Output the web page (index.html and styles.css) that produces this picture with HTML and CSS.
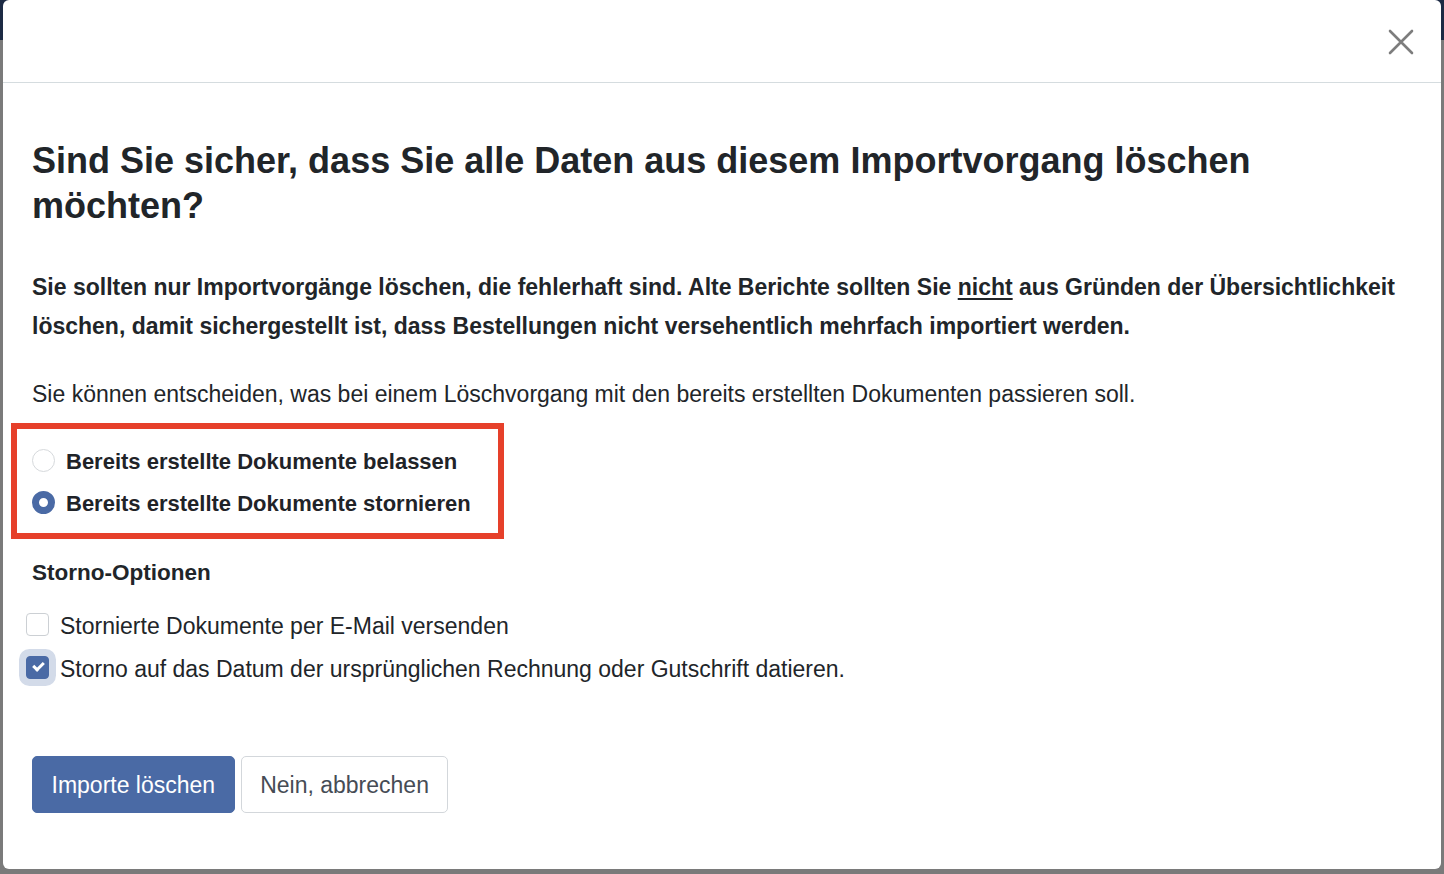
FILE: index.html
```html
<!DOCTYPE html>
<html lang="de">
<head>
    <meta charset="UTF-8">
    <meta name="viewport" content="width=device-width, initial-scale=1.0">
    <title>Importvorgang löschen</title>
    <link rel="stylesheet" href="styles.css">
</head>
<body>
    <div class="modal">
        <div class="modal-header">
            <button class="close-btn" type="button" aria-label="Schließen">
                <svg width="26" height="26" viewBox="0 0 26 26">
                    <path d="M2 2 L24 24 M24 2 L2 24" stroke="#7d7d7d" stroke-width="2.6" stroke-linecap="round" fill="none"/>
                </svg>
            </button>
        </div>

        <div class="modal-body">
            <h2 class="modal-title">Sind Sie sicher, dass Sie alle Daten aus diesem Importvorgang löschen möchten?</h2>

            <p class="warning-text">Sie sollten nur Importvorgänge löschen, die fehlerhaft sind. Alte Berichte sollten Sie <u>nicht</u> aus Gründen der Übersichtlichkeit löschen, damit sichergestellt ist, dass Bestellungen nicht versehentlich mehrfach importiert werden.</p>

            <p class="info-text">Sie können entscheiden, was bei einem Löschvorgang mit den bereits erstellten Dokumenten passieren soll.</p>

            <!-- Auswahl: Dokumente behalten oder stornieren -->
            <div class="radio-group">
                <label class="radio-row">
                    <input type="radio" name="docAction" value="keep">
                    <span>Bereits erstellte Dokumente belassen</span>
                </label>
                <label class="radio-row">
                    <input type="radio" name="docAction" value="cancel" checked>
                    <span>Bereits erstellte Dokumente stornieren</span>
                </label>
            </div>

            <h5 class="section-title">Storno-Optionen</h5>

            <label class="check-row">
                <input type="checkbox" name="sendMail">
                <span>Stornierte Dokumente per E-Mail versenden</span>
            </label>
            <label class="check-row">
                <input type="checkbox" name="originalDate" class="focused" checked>
                <span>Storno auf das Datum der ursprünglichen Rechnung oder Gutschrift datieren.</span>
            </label>

            <div class="buttons-container">
                <button class="btn btn-primary" type="button">Importe löschen</button>
                <button class="btn btn-default" type="button">Nein, abbrechen</button>
            </div>
        </div>
    </div>
</body>
</html>
```

FILE: styles.css
```css
* {
    box-sizing: border-box;
    margin: 0;
    padding: 0;
}

html, body {
    height: 100%;
}

/* abgedunkelte Seite hinter dem Dialog */
body {
    font-family: "Liberation Sans", Arial, Helvetica, sans-serif;
    color: #212529;
    background: linear-gradient(#1c2a44 0, #1c2a44 40px, #7a7a7a 40px);
    padding: 0 3px;
    overflow: hidden;
}

.modal {
    background-color: #fff;
    border-radius: 6px;
    height: 869px;
    display: flex;
    flex-direction: column;
}

.modal-header {
    height: 83px;
    border-bottom: 1px solid #d5dcdf;
    display: flex;
    justify-content: flex-end;
    align-items: center;
    padding-right: 27px;
    padding-top: 1px;
}

.close-btn {
    background: none;
    border: none;
    cursor: pointer;
    display: flex;
}

.modal-body {
    padding: 55px 32px 56px 29px;
}

.modal-title {
    max-width: 1320px;
    font-size: 36px;
    font-weight: bold;
    line-height: 45px;
    margin-bottom: 40px;
    color: #212529;
}

.warning-text {
    font-size: 23px;
    font-weight: bold;
    line-height: 39px;
    margin-bottom: 29px;
}

.warning-text u {
    text-underline-offset: 3px;
}

.info-text {
    font-size: 23px;
    line-height: 39px;
    margin-bottom: 9px;
}

/* roter Rahmen um die Auswahl */
.radio-group {
    display: inline-flex;
    flex-direction: column;
    border: 6px solid #e6402a;
    margin-left: -21px;
    padding: 12px 27px 8px 15px;
}

.radio-row {
    display: flex;
    align-items: center;
    height: 42px;
    font-size: 22px;
    font-weight: bold;
    color: #1f2328;
    cursor: pointer;
}

.radio-row input {
    appearance: none;
    width: 23px;
    height: 23px;
    border: 1px solid #d6d9dc;
    border-radius: 50%;
    background: #fff;
    margin-right: 11px;
    margin-top: -4px;
    flex-shrink: 0;
}

.radio-row input:checked {
    border: 7px solid #4a6aa5;
}

.section-title {
    font-size: 22.5px;
    font-weight: bold;
    line-height: 30px;
    margin-top: 19px;
    margin-bottom: 17px;
}

.check-row {
    display: flex;
    align-items: center;
    height: 43px;
    font-size: 23px;
    cursor: pointer;
}

.check-row input {
    appearance: none;
    position: relative;
    width: 23px;
    height: 23px;
    border: 1px solid #ccd0d4;
    border-radius: 4px;
    background: #fff;
    margin-left: -6px;
    margin-right: 11px;
    margin-top: -4px;
    flex-shrink: 0;
}

.check-row input:checked {
    background-color: #4a6aa5;
    border-color: #4a6aa5;
}

.check-row input.focused {
    box-shadow: 0 0 0 7px #d3dbe9;
}

/* weißer Haken */
.check-row input:checked::after {
    content: "";
    position: absolute;
    left: 6px;
    top: 5px;
    width: 8px;
    height: 4px;
    border-left: 3px solid #fff;
    border-bottom: 3px solid #fff;
    transform: rotate(-45deg);
}

.buttons-container {
    display: flex;
    gap: 6px;
    margin-top: 65px;
}

.btn {
    font-family: inherit;
    font-size: 23px;
    line-height: 30px;
    padding: 12.5px 18.5px;
    border-radius: 5px;
    cursor: pointer;
}

.btn-primary {
    background-color: #4a6aa5;
    border: 1px solid #4a6aa5;
    color: #fff;
}

.btn-default {
    background-color: #fff;
    border: 1px solid #d3d7db;
    color: #464c55;
}
```
